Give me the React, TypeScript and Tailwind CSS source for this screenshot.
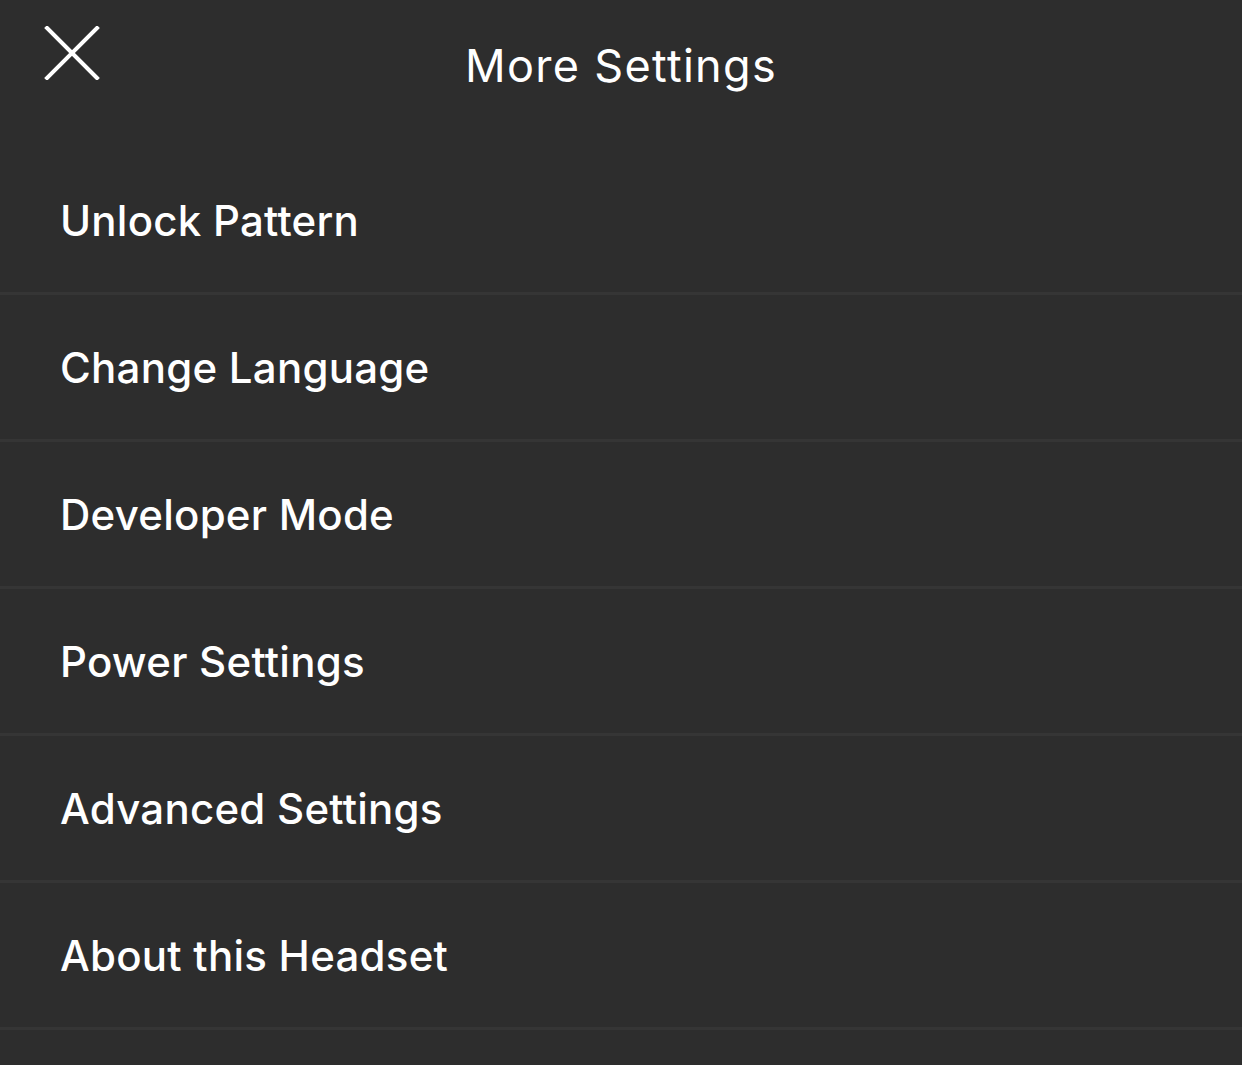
const items = [
  "Unlock Pattern",
  "Change Language",
  "Developer Mode",
  "Power Settings",
  "Advanced Settings",
  "About this Headset",
];

export default function App() {
  return (
    <div
      className="min-h-[1065px] w-full bg-[#2d2d2d] text-white"
      style={{ fontFamily: "Inter, 'Noto Sans', sans-serif" }}
    >
      <header className="relative flex h-[148px] items-start justify-center">
        <button className="absolute left-[44px] top-[26px] flex h-[54px] w-[56px] items-center justify-center">
          <svg width="56" height="54" viewBox="0 0 56 54" fill="none">
            <path d="M3 2 L53 52 M53 2 L3 52" stroke="white" strokeWidth="4" strokeLinecap="square" />
          </svg>
        </button>
        <h1 className="mt-[38px] text-[45px] font-normal leading-[56px] tracking-[1.3px]">More Settings</h1>
      </header>

      <ul className="flex flex-col">
        {items.map((item) => (
          <li
            key={item}
            className="flex h-[147px] items-center border-b-[3px] border-[#353535] pl-[60px] text-[42px] font-medium tracking-[0.25px]"
          >
            {item}
          </li>
        ))}
      </ul>
    </div>
  );
}
